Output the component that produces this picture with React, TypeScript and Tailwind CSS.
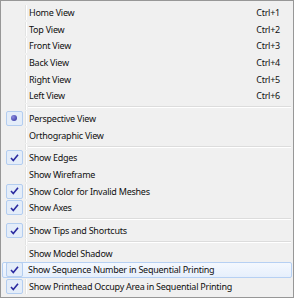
import React from "react";

type Item =
  | { kind: "sep" }
  | { kind: "item"; label: string; shortcut?: string; mark?: "check" | "radio"; hot?: boolean };

const items: Item[] = [
  { kind: "item", label: "Home View", shortcut: "Ctrl+1" },
  { kind: "item", label: "Top View", shortcut: "Ctrl+2" },
  { kind: "item", label: "Front View", shortcut: "Ctrl+3" },
  { kind: "item", label: "Back View", shortcut: "Ctrl+4" },
  { kind: "item", label: "Right View", shortcut: "Ctrl+5" },
  { kind: "item", label: "Left View", shortcut: "Ctrl+6" },
  { kind: "sep" },
  { kind: "item", label: "Perspective View", mark: "radio" },
  { kind: "item", label: "Orthographic View" },
  { kind: "sep" },
  { kind: "item", label: "Show Edges", mark: "check" },
  { kind: "item", label: "Show Wireframe" },
  { kind: "item", label: "Show Color for Invalid Meshes", mark: "check" },
  { kind: "item", label: "Show Axes", mark: "check" },
  { kind: "sep" },
  { kind: "item", label: "Show Tips and Shortcuts", mark: "check" },
  { kind: "sep" },
  { kind: "item", label: "Show Model Shadow" },
  { kind: "item", label: "Show Sequence Number in Sequential Printing", mark: "check", hot: true },
  { kind: "item", label: "Show Printhead Occupy Area in Sequential Printing", mark: "check" },
];

function Mark({ type }: { type: "check" | "radio" }) {
  return (
    <div className="w-[17px] h-[15px] rounded-[2px] border border-[#b3cdf0] bg-[#e4edf9] flex items-center justify-center">
      {type === "check" ? (
        <svg width="9" height="8" viewBox="0 0 9 8">
          <path d="M1 4 L3.3 6.5 L8 0.8" fill="none" stroke="#2a2aa0" strokeWidth="1.6" />
        </svg>
      ) : (
        <div className="w-[6px] h-[6px] rounded-full bg-[radial-gradient(circle_at_35%_35%,#8c8ce0,#2d2d9a)]" />
      )}
    </div>
  );
}

export default function App() {
  return (
    <div
      className="w-[294px] h-[298px] border border-[#979797] bg-[#f0f0f0] pt-[3px] px-[1px] flex flex-col text-[9px] tracking-[-0.25px] text-[#111]"
      style={{ fontFamily: '"Noto Sans", "Open Sans", sans-serif' }}
    >
      {items.map((it, i) =>
        it.kind === "sep" ? (
          <div key={i} className="h-[6px] flex">
            <div className="w-[24px] border-r border-r-[#e2e3e3] shrink-0" />
            <div className="flex-1 flex flex-col justify-center pl-[1px] pr-[1px] border-l border-l-white">
              <div className="h-[1px] bg-[#dcdcdc]" />
              <div className="h-[1px] bg-white" />
            </div>
          </div>
        ) : (
          <div key={i} className="h-[16.7px] flex">
            <div
              className={
                "flex-1 flex items-center " +
                (it.hot
                  ? "rounded-[2px] border border-[#b6d0f3] bg-[linear-gradient(#f4f8fe,#e6effc)]"
                  : "border border-transparent")
              }
            >
              <div
                className={
                  "w-[23px] h-full shrink-0 flex items-center justify-center " +
                  (it.hot ? "" : "border-r border-r-[#e2e3e3]")
                }
              >
                {it.mark && <Mark type={it.mark} />}
              </div>
              <div className={"flex-1 h-full flex items-center pl-[2px] pr-[11px] " + (it.hot ? "" : "border-l border-l-white")}>
                <span className="whitespace-nowrap leading-none">{it.label}</span>
                {it.shortcut && <span className="ml-auto whitespace-nowrap leading-none">{it.shortcut}</span>}
              </div>
            </div>
          </div>
        )
      )}
    </div>
  );
}
